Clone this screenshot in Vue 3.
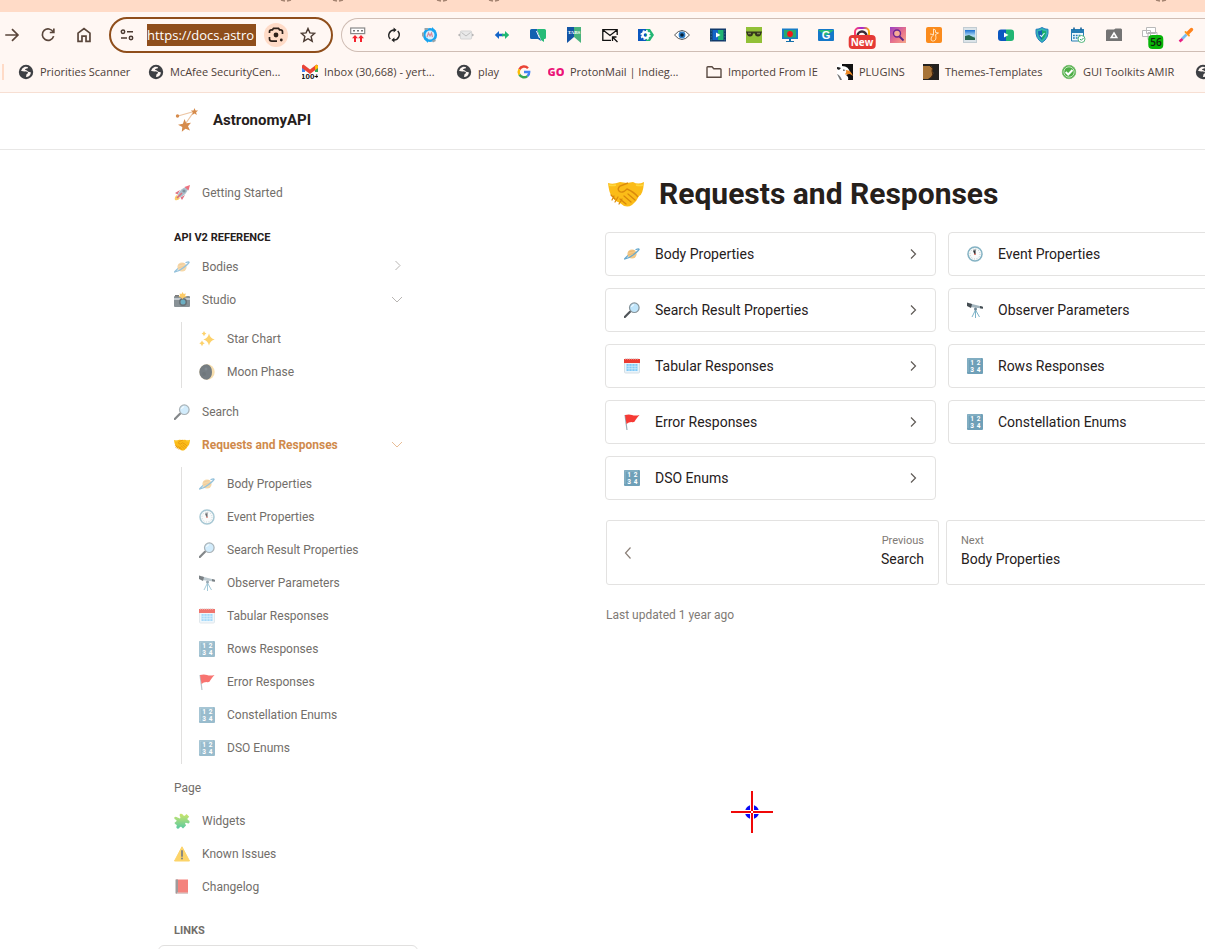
<script setup>
const extensions = [
  { id: 'x-upload', label: 'Uploader' },
  { id: 'x-sync', label: 'Sync' },
  { id: 'x-globe', label: 'Auto refresh' },
  { id: 'x-mail', label: 'Mail' },
  { id: 'x-arrows', label: 'Resize' },
  { id: 'x-flip', label: 'Notes' },
  { id: 'x-tabs', label: 'Tabs' },
  { id: 'x-letter', label: 'Mail link' },
  { id: 'x-gear', label: 'Settings' },
  { id: 'x-eye', label: 'View' },
  { id: 'x-video', label: 'Video' },
  { id: 'x-glasses', label: 'Reader' },
  { id: 'x-record', label: 'Recorder' },
  { id: 'x-g', label: 'Mail checker' },
  { id: 'x-ring', label: 'Camera', badge: 'New', tone: 'red' },
  { id: 'x-search', label: 'Search' },
  { id: 'x-bird', label: 'Bird' },
  { id: 'x-photo', label: 'Image' },
  { id: 'x-play', label: 'Player' },
  { id: 'x-shield', label: 'Shield' },
  { id: 'x-calendar', label: 'Calendar' },
  { id: 'x-drive', label: 'Drive' },
  { id: 'x-windows', label: 'Windows', badge: '56', tone: 'green' },
  { id: 'x-dropper', label: 'Color picker' }
]

const bookmarks = [
  { id: 'b-globe', label: 'Priorities Scanner' },
  { id: 'b-globe', label: 'McAfee SecurityCen...' },
  { id: 'b-gmail', label: 'Inbox (30,668) - yert...' },
  { id: 'b-globe', label: 'play' },
  { id: 'b-google', label: '' },
  { id: 'b-go', label: 'ProtonMail | Indieg...' },
  { id: 'b-folder', label: 'Imported From IE' },
  { id: 'b-eagle', label: 'PLUGINS' },
  { id: 'b-theme', label: 'Themes-Templates' },
  { id: 'b-check', label: 'GUI Toolkits AMIR' },
  { id: 'b-globe', label: '' }
]

const responses = [
  { icon: 'e-planet', label: 'Body Properties' },
  { icon: 'e-clock', label: 'Event Properties' },
  { icon: 'e-lens', label: 'Search Result Properties' },
  { icon: 'e-scope', label: 'Observer Parameters' },
  { icon: 'e-cal', label: 'Tabular Responses' },
  { icon: 'e-nums', label: 'Rows Responses' },
  { icon: 'e-flag', label: 'Error Responses' },
  { icon: 'e-nums', label: 'Constellation Enums' },
  { icon: 'e-nums', label: 'DSO Enums' }
]

const reference = [
  { icon: 'e-planet', label: 'Bodies', chevron: 'right' },
  {
    icon: 'e-camera', label: 'Studio', chevron: 'down',
    children: [
      { icon: 'e-spark', label: 'Star Chart' },
      { icon: 'e-moon', label: 'Moon Phase' }
    ]
  },
  { icon: 'e-lens', label: 'Search' },
  { icon: 'e-hands', label: 'Requests and Responses', chevron: 'down', active: true, children: responses },
  { label: 'Page' },
  { icon: 'e-puzzle', label: 'Widgets' },
  { icon: 'e-warn', label: 'Known Issues' },
  { icon: 'e-book', label: 'Changelog' }
]
</script>

<template>
  <div class="page">
    <svg class="sprite" aria-hidden="true">
      <defs>
        <linearGradient id="blueGreen"><stop offset=".5" stop-color="#0b57c0" /><stop offset=".5" stop-color="#22b573" /></linearGradient>
        <linearGradient id="rainbow"><stop offset="0" stop-color="#ff3e6c" /><stop offset=".5" stop-color="#a126d9" /><stop offset="1" stop-color="#ffb400" /></linearGradient>
        <linearGradient id="insta" x1="0" y1="0" x2="1" y2="1"><stop offset="0" stop-color="#9b3fc4" /><stop offset=".55" stop-color="#e9738a" /><stop offset="1" stop-color="#f5a88a" /></linearGradient>
        <linearGradient id="puzzleFill" x1="0" y1="0" x2="0" y2="1"><stop offset="0" stop-color="#b8dc2c" /><stop offset="1" stop-color="#12b37c" /></linearGradient>
        <linearGradient id="sky" x1="0" y1="0" x2="0" y2="1"><stop offset="0" stop-color="#1c6fd0" /><stop offset=".6" stop-color="#b9e2f8" /><stop offset="1" stop-color="#2a6a5a" /></linearGradient>
      </defs>

      <symbol id="x-upload" viewBox="0 0 16 16"><rect x=".7" y="1" width="14" height="5.6" fill="#fff" stroke="#888" stroke-width="1.2" /><path d="M3 3.8h2M7 3.8h2M11 3.8h2" stroke="#777" stroke-width="1.6" /><path d="M5 8l3 3.2H6V15H4v-3.8H2zM11 8l3 3.2h-2V15h-2v-3.8H8z" fill="#f5232e" /></symbol>
      <symbol id="x-sync" viewBox="0 0 16 16"><path d="M4.300 12A5.300 5.300 0 0 1 8.300 3M11.700 4a5.300 5.300 0 0 1-4 9" fill="none" stroke="#222" stroke-width="1.400" /><path d="M7.600.5l3 2.500-3 2.500zM8.400 15.500l-3-2.500 3-2.500z" fill="#222" /></symbol>
      <symbol id="x-globe" viewBox="0 0 16 16"><circle cx="8" cy="8" r="5.800" fill="#d8effc" stroke="#18a4ef" stroke-width="2.600" /><path d="M2.500 2h3.400M1 5.500v4M10.500 14.500l3-1.400" stroke="#96a4ab" stroke-width="2" /><path d="M5 10l1.500-4L8 9l1.500-3 1 4" fill="none" stroke="#d78b9c" stroke-width="1.200" /><path d="M10 0l4 4-4 .6zM6 16l-4-4 4-.6z" fill="#18a4ef" /></symbol>
      <symbol id="x-mail" viewBox="0 0 16 16"><rect x="2.400" y="4" width="11.200" height="8" rx="1" fill="#e9e9e9" stroke="#d5d5d5" /><path d="M3.500 5.500L8 9l4.500-3.500" fill="none" stroke="#bdbdbd" /><path d="M2 7L.5 8 2 9M14 7l1.500 1L14 9" fill="none" stroke="#aaa" /></symbol>
      <symbol id="x-arrows" viewBox="0 0 16 16"><path d="M.8 8L5 4v2.700h4v2.600H5V12z" fill="#1565c8" /><path d="M15.200 8L11 4v2.700H8v2.600h3V12z" fill="#1fb872" /></symbol>
      <symbol id="x-flip" viewBox="0 0 16 16"><path d="M1.500 2H7l4 12-3-2H1.500A1.500 1.500 0 0 1 0 10.500V3.500A1.500 1.500 0 0 1 1.500 2z" fill="#1261b0" /><path d="M7 2h7.500A1.500 1.500 0 0 1 16 3.500v7a1.500 1.500 0 0 1-1.500 1.500H14v3l-3-2z" fill="#27bb77" /><path d="M6.500 4l3 7" stroke="#fff" /></symbol>
      <symbol id="x-tabs" viewBox="0 0 16 16"><path d="M1 0h7v10l-7 6z" fill="#1455a5" /><path d="M8 0h7v16L8 10z" fill="#48b37c" /><text x="8" y="7" text-anchor="middle" font-size="5" font-family="Liberation Serif" font-weight="700" fill="#fff">TABS</text></symbol>
      <symbol id="x-letter" viewBox="0 0 16 16"><path d="M9 13.300H.8V2.700h14.400V8M1 3l7 5.500L15 3" fill="none" stroke="#111" stroke-width="1.300" /><path d="M15.500 15L11 10.500M10.500 14v-4h4" fill="none" stroke="#111" stroke-width="1.300" /></symbol>
      <symbol id="x-gear" viewBox="0 0 16 16"><path d="M0 2h8v12H0z" fill="#0b57c0" /><path d="M8 2h4l4 6-4 6H8z" fill="#22b573" /><circle cx="7.500" cy="8" r="2.900" fill="none" stroke="#fff" stroke-width="2.200" /><circle cx="7.500" cy="8" r="4.400" fill="none" stroke="#fff" stroke-width="1.400" stroke-dasharray="1.800 1.650" /></symbol>
      <symbol id="x-eye" viewBox="0 0 16 16"><path d="M.5 8Q8-1 15.500 8 8 17 .5 8z" fill="#fff" stroke="#555" /><circle cx="8" cy="8" r="3.400" fill="#2f7fc8" /><circle cx="8" cy="8" r="1.800" fill="#072237" /></symbol>
      <symbol id="x-video" viewBox="0 0 16 16"><rect y="1.500" width="16" height="13" fill="#123a6b" /><rect x="2.500" y="3" width="5.500" height="10" fill="#1565c8" /><rect x="8" y="3" width="5.500" height="10" fill="#22b573" /><path d="M6 5.500v5L10.500 8z" fill="#fff" /><path d="M1.200 3v11M14.800 3v11" stroke="#3e8290" stroke-width=".8" stroke-dasharray="1.500 1.500" /></symbol>
      <symbol id="x-glasses" viewBox="0 0 16 16"><rect width="16" height="16" fill="#92c037" /><path d="M0 4.500h16v1h-.5q-.3 4-3.500 4T9 6.500H7q0 3-3 3t-3.500-4H0z" fill="#34351d" /><path d="M2 6.500h3M11 6.500h3" stroke="#7b8550" stroke-width="1.500" /></symbol>
      <symbol id="x-record" viewBox="0 0 16 16"><path d="M0 1.500h16V12H0z" fill="#177cc6" /><path d="M2 3h12v7.500H2z" fill="#25a970" /><circle cx="8" cy="7" r="2.900" fill="#f21818" /><path d="M7 12h2v2h3v1H4v-1h3z" fill="#1670ac" /></symbol>
      <symbol id="x-g" viewBox="0 0 16 16"><rect y="2" width="16" height="12" rx="1" fill="#1478c9" /><path d="M0 3l8 6 8-6z" fill="#25b876" /><text x="8" y="12" text-anchor="middle" font-size="11" font-family="Liberation Sans" font-weight="700" fill="#fff">G</text></symbol>
      <symbol id="x-ring" viewBox="0 0 16 16"><path d="M1 8V5a4 4 0 0 1 4-4h6a4 4 0 0 1 4 4v3" fill="none" stroke="url(#rainbow)" stroke-width="2" /><path d="M3.500 9a4.500 4.500 0 0 1 9 0" fill="none" stroke="#3b2b35" stroke-width="2.400" /></symbol>
      <symbol id="x-search" viewBox="0 0 16 16"><rect width="16" height="16" fill="url(#insta)" /><circle cx="7" cy="6.500" r="3.500" fill="#f6ad95" stroke="#6d2591" stroke-width="1.400" /><path d="M9.500 9.500l4 4" stroke="#5b2184" stroke-width="1.800" /></symbol>
      <symbol id="x-bird" viewBox="0 0 16 16"><rect width="16" height="16" rx="2" fill="#fb8b1c" /><path d="M7.500 2q3 .5 2 3.500l3 .5-3 1.500q1.500 6-2 6.500T5.500 10l2-2zM4 7l3 .5" fill="none" stroke="#ffe2bd" stroke-linejoin="round" /></symbol>
      <symbol id="x-photo" viewBox="0 0 16 16"><rect x="1.500" y=".5" width="13" height="15" fill="#dbe3e8" stroke="#c2ccd2" /><path d="M3 3h10v10H3z" fill="url(#sky)" /><path d="M3 9l4-1 6 3v2H3z" fill="#28694f" /></symbol>
      <symbol id="x-play" viewBox="0 0 16 16"><rect y="2.500" width="16" height="11.500" rx="3" fill="url(#blueGreen)" /><path d="M6 5.500v5L10.500 8z" fill="#fff" /></symbol>
      <symbol id="x-shield" viewBox="0 0 16 16"><path d="M8 .5q3 2 6 1.800 1 9-6 13.200Q1 11.500 2 2.300 5 2.500 8 .5z" fill="#35b5b2" stroke="#207bc1" /><path d="M8 3q2 1.300 4 1.200Q12 10 8 13z" fill="#16ad6a" /><path d="M8 3Q6 4.300 4 4.200 4 10 8 13z" fill="#1465b3" /><path d="M6 8l1.500 1.700L10.500 6" fill="none" stroke="#d9f2ff" stroke-width="1.100" /></symbol>
      <symbol id="x-calendar" viewBox="0 0 16 16"><path d="M1.500 3h12v11h-12z" fill="#eef8fc" stroke="#267eb5" /><path d="M1 2h13v4H1z" fill="#267eb5" /><path d="M4 .5v2.500M11 .5v2.500" stroke="#1d659a" stroke-width="1.600" /><path d="M3 8.500h8M3 11h5" stroke="#267eb5" stroke-width="1.600" stroke-dasharray="1.800 1" /><circle cx="11.500" cy="12" r="3.500" fill="#fff" stroke="#54b77c" /><path d="M10 12l1.300 1.300L13.500 11" fill="none" stroke="#32a46a" /></symbol>
      <symbol id="x-drive" viewBox="0 0 16 16"><path d="M0 3.500L1 2.500h7L9.500 1.500H15l1 1V14H0z" fill="#747474" /><path d="M8 6l2.800 4.500H5.200z" fill="none" stroke="#fff" stroke-width="1.500" /></symbol>
      <symbol id="x-windows" viewBox="0 0 16 16"><g fill="#fff" stroke="#b9b9b9"><path d="M4.500.5h9v6h-9zM.5 3.500h8v6h-8zM6 5.500h9v7H6z" /></g></symbol>
      <symbol id="x-dropper" viewBox="0 0 16 16"><path d="M4 12l4.500-4.500" stroke="#77bdf3" stroke-width="2.600" /><path d="M1.500 14.500L4.500 12" stroke="#e91e83" stroke-width="2.600" /><path d="M7.500 5L11 8.500" stroke="#ff9a1b" stroke-width="1.800" stroke-linecap="round" /><path d="M10.500 5.500l3-3" stroke="#ff831d" stroke-width="3.400" stroke-linecap="round" /></symbol>

      <symbol id="b-globe" viewBox="0 0 16 16"><circle cx="8" cy="8" r="7.200" fill="#3e4044" /><path d="M7 2.800q-3 1-4 4 3 1 5 .5.8 1 2 .6 0 2-1.500 2.300L8 13q4 0 5-4.500-2-1-3-.8-1-2-3-1.700 0-2 2.500-1.500l.5-1.500z" fill="#fff7f3" /></symbol>
      <symbol id="b-gmail" viewBox="0 0 16 16"><path d="M1 8h14v8H1z" fill="#fff" /><path d="M0 2v6h3V4z" fill="#4285f4" /><path d="M16 2v6h-3V4z" fill="#34a853" /><path d="M0 1.500L1.500.5 8 5.500l6.500-5L16 1.500V4l-8 6-8-6z" fill="#ea4335" /><path d="M13 2L14.500.7 16 1.700V4l-3 2z" fill="#fbbc04" /><text x="8" y="14.500" text-anchor="middle" font-size="8" font-family="Liberation Sans" font-weight="700" fill="#111">100+</text></symbol>
      <symbol id="b-google" viewBox="0 0 16 16"><g fill="none" stroke-width="2.400"><path d="M12 4.200A5.300 5.300 0 0 0 3.400 5.400" stroke="#ea4335" /><path d="M3.400 5.400a5.300 5.300 0 0 0 0 5.200" stroke="#fbbc05" /><path d="M3.400 10.600a5.300 5.300 0 0 0 8 1.500" stroke="#34a853" /><path d="M11.400 12.100Q13.300 10.600 13.200 8H8" stroke="#4285f4" /></g></symbol>
      <symbol id="b-go" viewBox="0 0 16 16"><text x="8" y="12" text-anchor="middle" font-size="11" font-family="Open Sans" font-weight="800" fill="#eb1478">GO</text></symbol>
      <symbol id="b-folder" viewBox="0 0 16 16"><path d="M1 13.300V3.500q0-.8.800-.8H6l1.800 2h6.400q.8 0 .8.800v7.800z" fill="none" stroke="#5a4a42" stroke-width="1.400" /></symbol>
      <symbol id="b-eagle" viewBox="0 0 16 16"><path d="M0 0h16v16H0z" fill="#fff" /><path d="M5 0h11v16h-5q1-3-2-5l4-2q-1-7-8-7z" fill="#111" /><path d="M0 3q2 0 4 1L2 6 0 5zM6 5.500l2.500.5L6.500 7z" fill="#222" /><path d="M0 10q3 1 5 6H3z" fill="#777" /><path d="M9 6q5 0 7 6l-3-2-5 .5q2-2 1-4.500z" fill="#ef8a24" /></symbol>
      <symbol id="b-theme" viewBox="0 0 16 16"><rect width="16" height="16" fill="#242220" /><path d="M0 2h8l2 3-1 2 1.500 2L8 13l-3 2H0z" fill="#a87437" /><path d="M7 2q4 2 2 5 2 4-1 7" fill="none" stroke="#47260d" /></symbol>
      <symbol id="b-check" viewBox="0 0 16 16"><circle cx="8" cy="8" r="6.700" fill="#4ead46" stroke="#7bbf72" /><circle cx="8" cy="8" r="5.200" fill="none" stroke="#c5e8be" /><path d="M4.700 8l2.500 2.500 4.300-4.500" fill="none" stroke="#fff" stroke-width="2" /></symbol>

      <symbol id="e-rocket" viewBox="0 0 16 16"><path d="M1 15q-1-3 2-5l3 3q-2 3-5 2z" fill="#f8b62b" /><path d="M6 5L1 8l2.500 1.500zM11 10l-3 5-1.500-2.500z" fill="#d5354c" /><path d="M3.500 10Q7 3 12 2l2 2q-1 5-8 8.500z" fill="#8aa6b8" /><path d="M10.500 2L16 0l-1.500 5.500z" fill="#e6374a" /><circle cx="10" cy="6" r="1.600" fill="#4d6474" /><path d="M3 13l5-5" stroke="#c93047" stroke-width="1.600" /></symbol>
      <symbol id="e-planet" viewBox="0 0 16 16"><circle cx="8" cy="8" r="4.600" fill="#f3c884" /><path d="M4.500 6l6-1.500M4 9l7-2" stroke="#ebb774" /><path d="M4 9.500Q-1 14 1 12.800q5-1 9-4.500 6-5 5-5.300-1-.4-3.500.8" fill="none" stroke="#68a9ce" stroke-width="1.200" /></symbol>
      <symbol id="e-camera" viewBox="0 0 16 16"><rect y="4" width="16" height="11" rx="1" fill="#56636a" /><path d="M0 6h16v2H0z" fill="#a7b2b8" /><path d="M1 3h4v1.500H1z" fill="#444" /><circle cx="9" cy="10" r="4" fill="#29363d" /><circle cx="9" cy="10" r="2.500" fill="#2f8eaa" /><path d="M8.500 0l1.200 2 2.300-.5-1 2L13 5l-3 .5L8.500 7 7 5.500 4.500 5l1.500-1.500-.5-2L7.500 2z" fill="#fbb629" /></symbol>
      <symbol id="e-spark" viewBox="0 0 16 16"><path d="M10 2.500q1.200 5 5.700 6-4.500 1-5.700 6-1.200-5-5.700-6 4.500-1 5.700-6zM5 0q.6 2 2.400 2.600Q5.600 3.200 5 5.200 4.400 3.200 2.600 2.600 4.400 2 5 0zM3 9.500q.6 2.200 2.700 2.800Q3.600 13 3 15.200 2.400 13 .3 12.300 2.400 11.700 3 9.500z" fill="#fdbf2d" /></symbol>
      <symbol id="e-moon" viewBox="0 0 16 16"><circle cx="8" cy="8" r="7.700" fill="#f4d18c" /><path d="M8 .3q5 1.500 5 7.700T8 15.700A7.700 7.700 0 0 1 8 .3z" fill="#3c474e" /><circle cx="7" cy="5" r="1.500" fill="#4a5861" /><circle cx="5" cy="10" r="2" fill="#333e45" /></symbol>
      <symbol id="e-lens" viewBox="0 0 16 16"><path d="M.8 15L6 9.800" stroke="#505559" stroke-width="2.200" stroke-linecap="round" /><circle cx="10.300" cy="5.700" r="4.800" fill="#bfe5fb" stroke="#859299" stroke-width="1.200" /><path d="M7.500 5q.6-2 2.600-2.300" fill="none" stroke="#fff" /></symbol>
      <symbol id="e-hands" viewBox="0 0 36 26"><path d="M0 2Q5 4 12 1l7 1 6-1q5 3 11 0-1 13-5 14-2 5-7 9-6 4-12-2-7-3-9-8Q1 11 0 2z" fill="#fbbc18" /><path d="M20 2l-8 3q-3 3-1 5 3 3 8-2 7 3 11 8" fill="none" stroke="#db8b0b" stroke-width="1.400" /><path d="M20 13l7 6M16 15l7 6M12 18l6 5M3 14l4 4M6 15l-2 4M10 16l-3 5M14 18l-3 5" fill="none" stroke="#d9870c" stroke-width="1.200" stroke-linecap="round" /><path d="M1 4q4 1 7 0M28 4q4 1 7 0" fill="none" stroke="#ffd83c" stroke-width="1.500" /></symbol>
      <symbol id="e-clock" viewBox="0 0 16 16"><circle cx="8" cy="8" r="7" fill="#f7fafa" stroke="#84b2c3" stroke-width="1.500" /><circle cx="8" cy="8" r="5" fill="none" stroke="#a7b7bf" stroke-dasharray=".8 1.820" /><path d="M8 8V3.500M8 8L6.500 4.500" stroke="#2f3438" stroke-width="1.100" /><circle cx="8" cy="8.300" r=".8" fill="#d64232" /></symbol>
      <symbol id="e-scope" viewBox="0 0 16 16"><path d="M8.500 8L5 15M8.500 8v8M8.500 8l4 7" stroke="#7db3c8" /><path d="M3 1.500l12 3v2L3 5z" fill="#a2b4bd" /><path d="M0 .5L5 2 4 6 0 4zM13 4l3 .7v2l-3-.5z" fill="#444c52" /><circle cx="8.500" cy="7" r="1.500" fill="#6d8593" /></symbol>
      <symbol id="e-cal" viewBox="0 0 16 16"><rect x=".5" y="1" width="15" height="14" rx="1" fill="#e9f4fb" stroke="#d5dfe5" /><path d="M0 1h16v4H0z" fill="#eb3b32" /><path d="M1 1h14" stroke="#f3b4ae" stroke-dasharray="1 1" /><path d="M2.500 6h11v7h-11z" fill="#7fcaf8" /><path d="M5 6v7M8 6v7M11 6v7M2.500 8.300h11M2.500 10.700h11" stroke="#d7effd" stroke-width=".7" /></symbol>
      <symbol id="e-nums" viewBox="0 0 16 16"><rect width="16" height="16" rx="1" fill="#6fa0b8" /><path d="M1 14V1h13" fill="none" stroke="#9cc1d1" stroke-width=".8" /><g font-family="Roboto" font-size="6.500" font-weight="700" fill="#fff" text-anchor="middle"><text x="5" y="7.300">1</text><text x="11.500" y="7.300">2</text><text x="5" y="14">3</text><text x="11.500" y="14">4</text></g></symbol>
      <symbol id="e-flag" viewBox="0 0 16 16"><path d="M1 1l2 15" stroke="#9aabb4" stroke-width="1.200" /><path d="M1 1q4-1 7 0t7.500 0q-2 2-4 5-1 3-4 2-3 0-5 2z" fill="#f63a35" /></symbol>
      <symbol id="e-puzzle" viewBox="0 0 16 16"><g fill="url(#puzzleFill)"><path d="M3.500 4.500l2.300 1q1-.5.200-2Q5 1.500 6.500.8q2-.6 2.800 1.400.7 1 1.500.5L12.500 1l2.700 2.700-1.700 1.800q-.4 1 .6 1.400 2 .8 1.400 2.600-.7 1.500-2.600.6-1.500-.8-1.900.2l1 2.300-3 2.900-1.800-1.700q-1-.4-1.400.5-.8 2-2.500 1.300-1.500-.8-.6-2.600.5-1.200-.4-1.600L3 12.700.4 10l2-1.800q.5-1-.6-1.400Q-.2 6 .4 4.300 1.500 3 3.500 4.500z" /></g></symbol>
      <symbol id="e-warn" viewBox="0 0 16 16"><path d="M8 .8L15.500 15H.5z" fill="#fcc22b" stroke="#fcc22b" stroke-linejoin="round" /><path d="M8 5v5" stroke="#4a4f52" stroke-width="1.800" stroke-linecap="round" /><circle cx="8" cy="12.600" r="1" fill="#4a4f52" /></symbol>
      <symbol id="e-book" viewBox="0 0 16 16"><path d="M2 .5h12v14H2z" fill="#f04f47" /><path d="M1.500.5H4v14H1.500z" fill="#777071" /><path d="M3 13.500h11V15H3z" fill="#cdb6b4" /></symbol>
    </svg>

    <div class="tabstrip">
      <svg width="100%" height="3" aria-hidden="true">
        <path v-for="x in [280, 332, 436, 488, 1155]" :key="x" :d="`M${x + 1} 0l4 1M${x + 7} 1l4-1`" fill="none" stroke="#a38370" stroke-width="1.500" />
      </svg>
    </div>

    <div class="toolbar">
      <button class="nav-button" aria-label="Forward"><svg viewBox="0 0 16 16"><path d="M2 8h11M8 2.700L13.300 8 8 13.300" /></svg></button>
      <button class="nav-button" aria-label="Reload"><svg viewBox="0 0 16 16"><path d="M12.600 5.300A5.100 5.100 0 1 0 13 9M13.200 2.200v3.600H9.600" /></svg></button>
      <button class="nav-button" aria-label="Home"><svg viewBox="0 0 16 16"><path d="M2.700 6.300L8 2.300l5.300 4v7.400H9.800V9H6.200v4.700H2.700z" /></svg></button>
      <div class="address">
        <button class="plain" aria-label="Site information"><svg class="s16" viewBox="0 0 16 16" fill="none" stroke="#4b3a31" stroke-width="1.500"><circle cx="4" cy="4.700" r="1.700" /><path d="M8 4.700h6M2 11h6" /><circle cx="12" cy="11" r="1.700" /></svg></button>
        <input class="url" type="text" aria-label="Address" value="https://docs.astro">
        <button class="plain lens" aria-label="Search with lens"><svg class="s16" viewBox="0 0 16 16" fill="none" stroke="#2e211a" stroke-width="1.700"><path d="M1.500 6V4.800q0-2 2-2h1L5.500 1.300h5l1 1.500h1q2 0 2 2V7M1.500 10v1.800q0 2.400 2.400 2.400H9" /><circle cx="8" cy="8" r="2.400" fill="#2e211a" stroke="none" /><circle cx="13.300" cy="13" r="1.400" fill="#2e211a" stroke="none" /></svg></button>
        <button class="plain" aria-label="Bookmark this page"><svg class="s16" viewBox="0 0 16 16"><path d="M8 1.500l1.900 4.400 4.800.4-3.600 3.200 1.100 4.700L8 11.700l-4.200 2.500 1.100-4.700L1.300 6.300l4.800-.4z" fill="none" stroke="#4b3a31" stroke-width="1.400" /></svg></button>
      </div>
      <div class="extensions">
        <button v-for="x in extensions" :key="x.id" class="extension" :aria-label="x.label">
          <svg class="s16"><use :href="'#' + x.id" /></svg>
          <span v-if="x.badge" class="badge" :class="x.tone">{{ x.badge }}</span>
        </button>
      </div>
    </div>

    <nav class="bookmarks" aria-label="Bookmarks">
      <a v-for="(b, i) in bookmarks" :key="i" class="bookmark" href="#">
        <svg class="s16"><use :href="'#' + b.id" /></svg><span>{{ b.label }}</span>
      </a>
    </nav>

    <header class="site-header">
      <a class="brand" href="#">
        <svg class="logo" viewBox="0 0 26 26" fill="#d68b4b">
          <path d="M4 9L20 4.500 12 16" fill="none" stroke="#ecc5a3" stroke-width="1.200" />
          <path d="M10.500 12l1.800 4.300 4.700-.6-3 3.500 2 4.300-4.500-1.800-3.700 3 .5-4.700-4.300-2.300 4.900-1zM20.500 1l1 2.400 2.600.2-2 1.700.7 2.600-2.300-1.400-2.200 1.400.6-2.600-2-1.700 2.600-.2z" /><circle cx="3.500" cy="9" r="1.700" />
        </svg>
        <span>AstronomyAPI</span>
      </a>
    </header>

    <div class="body">
      <aside class="sidebar">
        <a class="row start" href="#"><svg class="s16 emoji"><use href="#e-rocket" /></svg><span>Getting Started</span></a>
        <h2 class="group">API V2 REFERENCE</h2>
        <ul class="list">
          <li v-for="item in reference" :key="item.label">
            <a class="row" :class="{ active: item.active }" href="#">
              <svg v-if="item.icon" class="s16 emoji"><use :href="'#' + item.icon" /></svg>
              <span>{{ item.label }}</span>
              <svg v-if="item.chevron" class="chevron" viewBox="0 0 12 12"><path :d="item.chevron === 'down' ? 'M1 3l5 5 5-5' : 'M4.500 0L9 4.500 4.500 9'" /></svg>
            </a>
            <ul v-if="item.children" class="nested">
              <li v-for="c in item.children" :key="c.label">
                <a class="row" href="#"><svg class="s16 emoji"><use :href="'#' + c.icon" /></svg><span>{{ c.label }}</span></a>
              </li>
            </ul>
          </li>
        </ul>
        <h2 class="group links">LINKS</h2>
        <div class="link-card"></div>
      </aside>

      <main class="content">
        <h1><svg class="title-icon"><use href="#e-hands" /></svg><span>Requests and Responses</span></h1>
        <div class="cards">
          <a v-for="r in responses" :key="r.label" class="card" href="#">
            <svg class="s16"><use :href="'#' + r.icon" /></svg>
            <span>{{ r.label }}</span>
            <svg class="go" viewBox="0 0 12 12"><path d="M4 1.500L8.500 6 4 10.500" /></svg>
          </a>
        </div>
        <div class="pager">
          <a class="page-link previous" href="#">
            <svg class="back" viewBox="0 0 14 14"><path d="M9.500 1.500L4.500 7l5 5.500" /></svg>
            <span class="stack"><small>Previous</small><span>Search</span></span>
          </a>
          <a class="page-link" href="#"><span class="stack"><small>Next</small><span>Body Properties</span></span></a>
        </div>
        <p class="updated">Last updated 1 year ago</p>
      </main>
    </div>

    <svg class="crosshair" viewBox="0 0 42 42" aria-hidden="true">
      <circle cx="21" cy="21" r="7" fill="#0a0af5" />
      <path d="M21 14v14M14 21h14" stroke="#fff" stroke-width="4" />
      <path d="M21 0v42M0 21h42" stroke="#f00808" stroke-width="2" />
      <path d="M20 20h2v2h-2z" fill="#fff" />
    </svg>
  </div>
</template>

<style>
body { margin: 0; background: #fff; }
</style>

<style scoped>
.page { position: relative; display: flex; flex-direction: column; height: 100vh; overflow: hidden; background: #fff; color: #26201b; font-family: Roboto, "Liberation Sans", sans-serif; }
.page * { box-sizing: border-box; }
a { color: inherit; text-decoration: none; }
button { margin: 0; padding: 0; border: 0; background: none; font: inherit; }
svg { flex: none; display: block; }
.sprite { position: absolute; width: 0; height: 0; visibility: hidden; }
.s16 { width: 16px; height: 16px; }

.tabstrip { height: 12px; flex: none; background: #ffdbc7; }
.toolbar { display: flex; align-items: center; height: 46px; flex: none; background: #fff7f3; }
.nav-button { display: grid; place-items: center; width: 36px; height: 36px; flex: none; }
.nav-button:first-child { width: 30px; padding-right: 6px; }
.nav-button svg { width: 18px; height: 18px; fill: none; stroke: #5a463b; stroke-width: 1.5; }
.address { display: flex; align-items: center; width: 224px; height: 36px; margin: 0 8px 0 7px; padding: 0 8px; flex: none; border: 2px solid #8f4e1b; border-radius: 18px; }
.plain { display: grid; place-items: center; width: 24px; height: 24px; flex: none; border-radius: 50%; }
.address .plain:last-child { margin-left: 8px; }
.address .plain:first-child { width: 16px; }
.url { width: 109px; height: 22px; margin: 0 8px 0 12px; padding: 0; border: 0; background: #8f4e1b; color: #fff; font-family: "Open Sans", "Noto Sans", sans-serif; font-size: 13px; }
.lens { background: #ffdbc7; }
.extensions { display: flex; align-items: center; flex: 1 0 auto; height: 34px; padding-left: 8px; border: 1px solid #cfbdb4; border-right: 0; border-radius: 17px 0 0 17px; }
.extension { position: relative; display: grid; place-items: center; width: 16px; height: 16px; margin-right: 20px; }
.badge { position: absolute; top: 8px; left: 50%; transform: translateX(-50%); height: 14px; padding: 0 2px; border-radius: 4px; font-family: "Open Sans", sans-serif; font-size: 10px; font-weight: 700; line-height: 14px; }
.red { background: #e53935; color: #fff; }
.green { left: 14px; background: #08b508; color: #10240c; font-weight: 600; }

.bookmarks { position: relative; display: grid; grid-template-columns: 130px 154px 154px 60px 32px 158px 131px 86px 138px 134px auto; align-items: center; height: 35px; flex: none; padding: 0 0 7px 18px; border-bottom: 1px solid #f7dfd3; background: #fff7f3; white-space: nowrap; overflow: hidden; color: #4d4038; font-family: "Open Sans", "Noto Sans", sans-serif; font-size: 11px; }
.bookmarks::before { content: ""; position: absolute; left: 2px; top: 6px; width: 2px; height: 16px; background: #ffdbc7; }
.bookmark { display: flex; align-items: center; gap: 6px; }

.site-header { display: flex; align-items: center; height: 57px; flex: none; padding: 0 0 2px 174px; border-bottom: 1px solid #e8e7e6; }
.brand { display: flex; align-items: center; gap: 13px; font-size: 15px; font-weight: 700; }
.logo { width: 26px; height: 26px; }

.body { display: flex; flex: 1; min-height: 0; padding-left: 158px; }
.sidebar { width: 260px; flex: none; padding-top: 26px; font-size: 12px; color: #726e6a; }
ul { margin: 0; padding: 0; list-style: none; }
.list, .start { padding: 0 15px 0 16px; }
.row { display: flex; align-items: center; gap: 12px; height: 33px; line-height: 16px; }
.emoji { opacity: 0.7; }
.active { color: #d08a4c; font-weight: 700; }
.active .emoji { opacity: 1; }
.chevron { width: 12px; height: 12px; margin-left: auto; fill: none; stroke: #b8b5b3; stroke-width: 1; }
.active .chevron { stroke: #e8bd96; }
.nested { margin: 6px 0 7px 7px; padding-left: 17px; border-left: 1px solid #e1e0df; }
.group { margin: 20px 16px 3px; font-size: 11px; font-weight: 700; line-height: 18px; color: #26201b; }
.links { margin: 19px 16px 5px; color: #726e6a; }
.link-card { height: 40px; border: 1px solid #e1e0df; border-radius: 6px; }

.content { flex: 1; min-width: 674px; margin-left: 187px; padding-top: 24px; }
h1 { display: flex; align-items: center; gap: 15px; margin: 0 0 18px; padding-left: 3px; font-size: 30px; font-weight: 700; line-height: 40px; }
.title-icon { width: 36px; height: 26px; }
.cards { display: grid; grid-template-columns: 1fr 1fr; gap: 12px; }
.card { display: flex; align-items: center; gap: 15px; height: 44px; padding: 0 16px 0 18px; border: 1px solid #e3e2e1; border-radius: 4px; font-size: 14px; }
.go { width: 12px; height: 12px; margin-left: auto; fill: none; stroke: #5f5a56; stroke-width: 1.2; }
.pager { display: grid; grid-template-columns: 1fr 1fr; gap: 7px; margin: 20px 0 0 1px; }
.page-link { display: flex; align-items: center; justify-content: space-between; height: 65px; padding: 0 14px; border: 1px solid #e3e2e1; border-radius: 3px; font-size: 14px; line-height: 20px; }
.stack { display: flex; flex-direction: column; padding-bottom: 3px; }
.previous .stack { align-items: flex-end; }
small { font-size: 11px; line-height: 16px; color: #807a75; }
.back { width: 14px; height: 14px; fill: none; stroke: #8a7f77; stroke-width: 1.2; }
.updated { margin: 22px 0 0 1px; font-size: 12px; line-height: 16px; color: #807a75; }
.crosshair { position: absolute; left: 731px; top: 791px; width: 42px; height: 42px; }
</style>
